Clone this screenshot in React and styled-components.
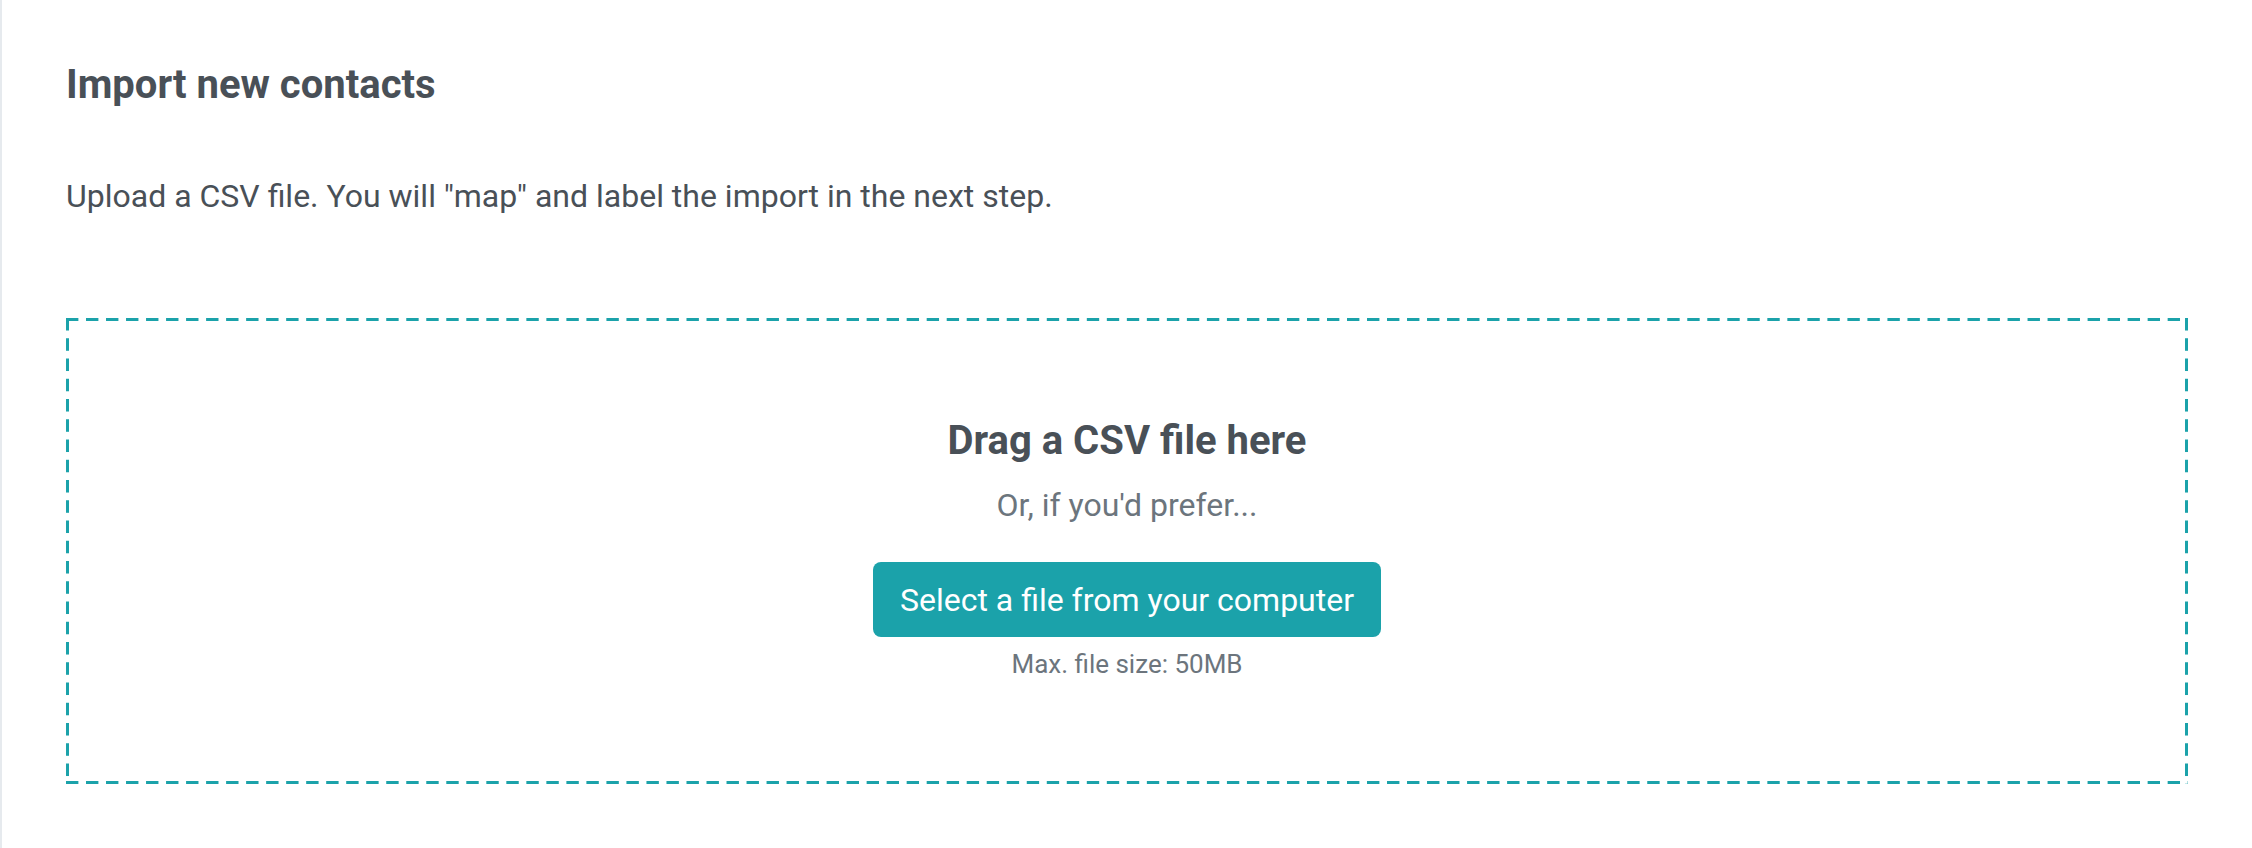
import styled, { createGlobalStyle } from 'styled-components';

const GlobalStyle = createGlobalStyle`
  html, body {
    margin: 0;
    padding: 0;
    background: #fff;
  }
  body {
    font-family: Roboto, "Noto Sans", "Liberation Sans", sans-serif;
    color: #495057;
  }
`;

const teal = '#1ba2aa';

const Page = styled.div`
  display: flex;
  min-height: 848px;
`;

const SideRule = styled.div`
  width: 2px;
  flex: none;
  background: #e6eaee;
`;

const Main = styled.main`
  flex: 1;
  padding: 62px 64px 0 64px;
`;

const Title = styled.h2`
  margin: 0;
  font-size: 40px;
  line-height: 46px;
  font-weight: 700;
  color: #495057;
`;

const Intro = styled.p`
  margin: 69px 0 0;
  font-size: 32px;
  line-height: 38px;
  font-weight: 400;
  color: #495057;
`;

const DropZone = styled.div`
  margin-top: 103px;
  height: 466px;
  box-sizing: border-box;
  padding-top: 99px;
  display: flex;
  flex-direction: column;
  align-items: center;
  background:
    linear-gradient(to right, ${teal} 60%, transparent 60%) left top / 20px 3px round no-repeat,
    linear-gradient(to right, ${teal} 60%, transparent 60%) left bottom / 20px 3px round no-repeat,
    linear-gradient(to bottom, ${teal} 60%, transparent 60%) left top / 3px 20px no-repeat round,
    linear-gradient(to bottom, ${teal} 60%, transparent 60%) right top / 3px 20px no-repeat round;
`;

const DropTitle = styled.h3`
  margin: 0;
  font-size: 40px;
  line-height: 48px;
  font-weight: 700;
  color: #495057;
`;

const DropHint = styled.p`
  margin: 21px 0 0;
  font-size: 32px;
  line-height: 38px;
  color: #6c757d;
`;

const SelectButton = styled.button`
  margin-top: 38px;
  height: 75px;
  padding: 0 27px;
  border: none;
  border-radius: 8px;
  background: ${teal};
  color: #fff;
  font-family: inherit;
  font-size: 32px;
  font-weight: 400;
  cursor: pointer;
`;

const SizeNote = styled.p`
  margin: 12px 0 0;
  font-size: 26px;
  line-height: 30px;
  color: #6c757d;
`;

export default function App() {
  return (
    <>
      <GlobalStyle />
      <Page>
        <SideRule />
        <Main>
          <Title>Import new contacts</Title>
          <Intro>Upload a CSV file. You will "map" and label the import in the next step.</Intro>
          <DropZone>
            <DropTitle>Drag a CSV file here</DropTitle>
            <DropHint>Or, if you'd prefer...</DropHint>
            <SelectButton type="button">Select a file from your computer</SelectButton>
            <SizeNote>Max. file size: 50MB</SizeNote>
          </DropZone>
        </Main>
      </Page>
    </>
  );
}
